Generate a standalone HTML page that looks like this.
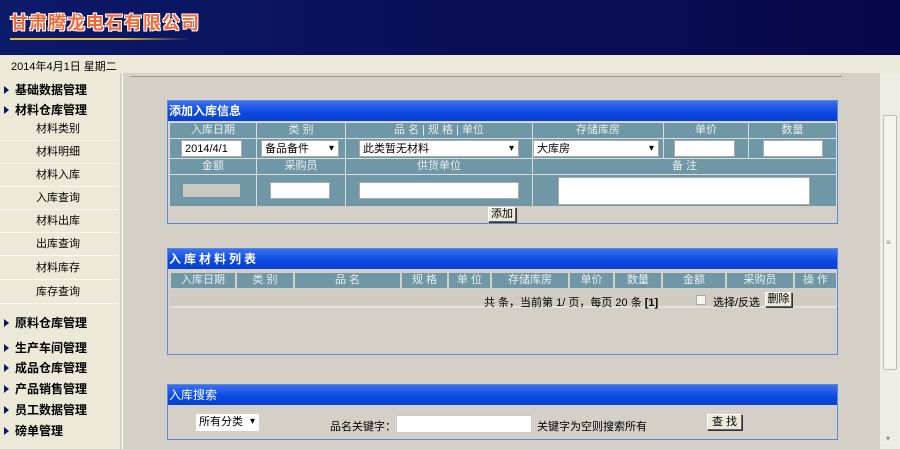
<!DOCTYPE html>
<html><head><meta charset="utf-8"><style>
*{margin:0;padding:0;box-sizing:border-box}
body{width:900px;height:449px;overflow:hidden;background:#d4d0c8;font-family:"Liberation Sans","Noto Sans CJK SC",sans-serif;font-size:12px;position:relative;color:#000}
.a{position:absolute}
#hdr{left:0;top:0;width:900px;height:55px;background:linear-gradient(90deg,#0c1a6a 0%,#0a0f55 50%,#07084a 100%)}
#logo{left:10px;top:9px;font-size:18px;font-weight:bold;color:#f06a3a;letter-spacing:1px;font-family:"WenQuanYi Zen Hei","Noto Sans CJK SC",sans-serif;text-shadow:1px 1px 0 #fff,-1px -1px 0 #fff,1px -1px 0 #fff,-1px 1px 0 #fff}
#line{left:10px;top:38px;width:180px;height:2px;background:linear-gradient(90deg,#e0c040,#e0c040 60%,rgba(224,192,64,0))}
#date{left:0;top:55px;width:900px;height:18px;background:#ece9d8;padding:3px 0 0 11px;font-size:11px}
#side{left:0;top:73px;width:120px;height:376px;background:#ece9d8}
.m{left:4px;font-weight:bold;font-size:12px}
.m:before{content:"";display:inline-block;width:0;height:0;border-left:5px solid #0a1a6a;border-top:4px solid transparent;border-bottom:4px solid transparent;margin-right:6px}
.s{left:0;width:118px;text-align:right;padding-right:38px;font-size:11px;border-bottom:1px solid #f8f6ee;height:23px;line-height:23px}
#main{left:122px;top:73px;width:758px;height:376px;background:#d4d0c8;border-left:1px solid #fff}
#sb{left:880px;top:73px;width:20px;height:376px;background:#eeede5}
.p{left:167px;width:671px;border:1px solid #5a8ad8;background:#d4d0c8}
.t{background:linear-gradient(#3a6ff0,#0a48e0 60%,#0840d0);color:#fff;font-weight:bold;height:20px;line-height:20px;padding-left:1px;font-size:12px}
.c{position:absolute;background:#6f97a5;color:#e8eef0;text-align:center;font-size:11px;line-height:15px}
.w{background:#fff;border:1px solid #aaa;position:absolute;font-size:11px;padding-left:3px;line-height:16px}
.dd:after{content:"▾";position:absolute;right:4px;top:0;font-size:10px}
.btn{position:absolute;background:#ece9d8;border:1px solid #666;border-top-color:#fff;border-left-color:#fff;box-shadow:1px 1px 0 #333;font-size:11px;text-align:center;line-height:13px}
</style></head><body>
<div id="hdr" class="a"></div>
<div id="logo" class="a">甘肃腾龙电石有限公司</div>
<div id="line" class="a"></div>
<div id="date" class="a">2014年4月1日 星期二</div>
<div id="side" class="a"></div>
<div class="a m" style="top:81px">基础数据管理</div>
<div class="a m" style="top:101px">材料仓库管理</div>
<div class="a s" style="top:118px">材料类别</div>
<div class="a s" style="top:141px">材料明细</div>
<div class="a s" style="top:164px">材料入库</div>
<div class="a s" style="top:187px">入库查询</div>
<div class="a s" style="top:210px">材料出库</div>
<div class="a s" style="top:233px">出库查询</div>
<div class="a s" style="top:257px">材料库存</div>
<div class="a s" style="top:281px">库存查询</div>
<div class="a m" style="top:314px">原料仓库管理</div>
<div class="a m" style="top:339px">生产车间管理</div>
<div class="a m" style="top:359px">成品仓库管理</div>
<div class="a m" style="top:380px">产品销售管理</div>
<div class="a m" style="top:401px">员工数据管理</div>
<div class="a m" style="top:422px">磅单管理</div>
<div id="main" class="a"></div>
<div class="a" style="left:130px;top:76px;width:712px;height:1px;background:#999"></div>
<div id="sb" class="a"></div>
<div class="a" style="left:883px;top:115px;width:14px;height:255px;background:#f4f3ee;border:1px solid #bbb;border-radius:2px"></div>
<div class="a" style="left:886px;top:238px;font-size:8px;color:#888">≡</div>
<div class="a" style="left:886px;top:434px;font-size:8px;color:#888">▾</div>

<div class="a p" style="top:100px;height:124px"><div class="t">添加入库信息</div></div>
<div class="a" style="left:169px;top:122px;width:668px;height:84px;background:#d8dde0"></div>
<div class="c" style="left:170px;top:123px;width:86px">入库日期</div>
<div class="c" style="left:257px;top:123px;width:88px">类 别</div>
<div class="c" style="left:346px;top:123px;width:186px">品 名 | 规 格 | 单位</div>
<div class="c" style="left:533px;top:123px;width:130px">存储库房</div>
<div class="c" style="left:664px;top:123px;width:84px">单价</div>
<div class="c" style="left:749px;top:123px;width:87px">数量</div>
<div class="c" style="left:170px;top:139px;width:86px;height:19px"></div>
<div class="c" style="left:257px;top:139px;width:88px;height:19px"></div>
<div class="c" style="left:346px;top:139px;width:186px;height:19px"></div>
<div class="c" style="left:533px;top:139px;width:130px;height:19px"></div>
<div class="c" style="left:664px;top:139px;width:84px;height:19px"></div>
<div class="c" style="left:749px;top:139px;width:87px;height:19px"></div>
<div class="c" style="left:170px;top:159px;width:86px">金额</div>
<div class="c" style="left:257px;top:159px;width:88px">采购员</div>
<div class="c" style="left:346px;top:159px;width:186px">供货单位</div>
<div class="c" style="left:533px;top:159px;width:303px">备 注</div>
<div class="c" style="left:170px;top:175px;width:86px;height:31px"></div>
<div class="c" style="left:257px;top:175px;width:88px;height:31px"></div>
<div class="c" style="left:346px;top:175px;width:186px;height:31px"></div>
<div class="c" style="left:533px;top:175px;width:303px;height:31px"></div>
<div class="w" style="left:181px;top:140px;width:61px;height:17px">2014/4/1</div>
<div class="w dd" style="left:261px;top:140px;width:78px;height:17px">备品备件</div>
<div class="w dd" style="left:359px;top:140px;width:160px;height:17px">此类暂无材料</div>
<div class="w dd" style="left:533px;top:140px;width:126px;height:17px">大库房</div>
<div class="w" style="left:674px;top:140px;width:61px;height:17px"></div>
<div class="w" style="left:763px;top:140px;width:60px;height:17px"></div>
<div class="a" style="left:183px;top:184px;width:57px;height:13px;background:#c8c8c0"></div>
<div class="w" style="left:270px;top:182px;width:60px;height:17px"></div>
<div class="w" style="left:359px;top:182px;width:160px;height:17px"></div>
<div class="w" style="left:558px;top:177px;width:252px;height:28px"></div>
<div class="btn" style="left:488px;top:207px;width:28px;height:15px">添加</div>

<div class="a p" style="top:248px;height:107px"><div class="t" style="letter-spacing:3px">入库材料列表</div></div>
<div class="c" style="left:171px;top:273px;width:64px">入库日期</div>
<div class="c" style="left:237px;top:273px;width:56px">类 别</div>
<div class="c" style="left:295px;top:273px;width:105px">品 名</div>
<div class="c" style="left:402px;top:273px;width:45px">规 格</div>
<div class="c" style="left:449px;top:273px;width:41px">单 位</div>
<div class="c" style="left:492px;top:273px;width:76px">存储库房</div>
<div class="c" style="left:570px;top:273px;width:43px">单价</div>
<div class="c" style="left:615px;top:273px;width:46px">数量</div>
<div class="c" style="left:663px;top:273px;width:62px">金额</div>
<div class="c" style="left:727px;top:273px;width:66px">采购员</div>
<div class="c" style="left:795px;top:273px;width:41px">操 作</div>
<div class="a" style="left:171px;top:289px;width:665px;height:19px;background:#d0ccc4;border-bottom:2px solid #e4e2dc"></div>
<div class="a" style="left:484px;top:294px;font-size:11px">共 条，当前第 1/ 页，每页 20 条 <b>[1]</b></div>
<div class="a" style="left:696px;top:295px;width:10px;height:10px;background:#f4f4f4;border:1px solid #aaa"></div>
<div class="a" style="left:713px;top:294px;font-size:11px">选择/反选</div>
<div class="btn" style="left:765px;top:292px;width:27px;height:15px">删除</div>

<div class="a p" style="top:384px;height:56px"><div class="t" style="font-weight:normal">入库搜索</div></div>
<div class="w dd" style="left:196px;top:414px;width:63px;height:17px;border:none">所有分类</div>
<div class="a" style="left:330px;top:418px;font-size:11px">品名关键字：</div>
<div class="w" style="left:396px;top:415px;width:136px;height:18px;border-color:#ccc"></div>
<div class="a" style="left:537px;top:418px;font-size:11px">关键字为空则搜索所有</div>
<div class="btn" style="left:707px;top:414px;width:35px;height:16px;line-height:15px">查 找</div>
</body></html>
